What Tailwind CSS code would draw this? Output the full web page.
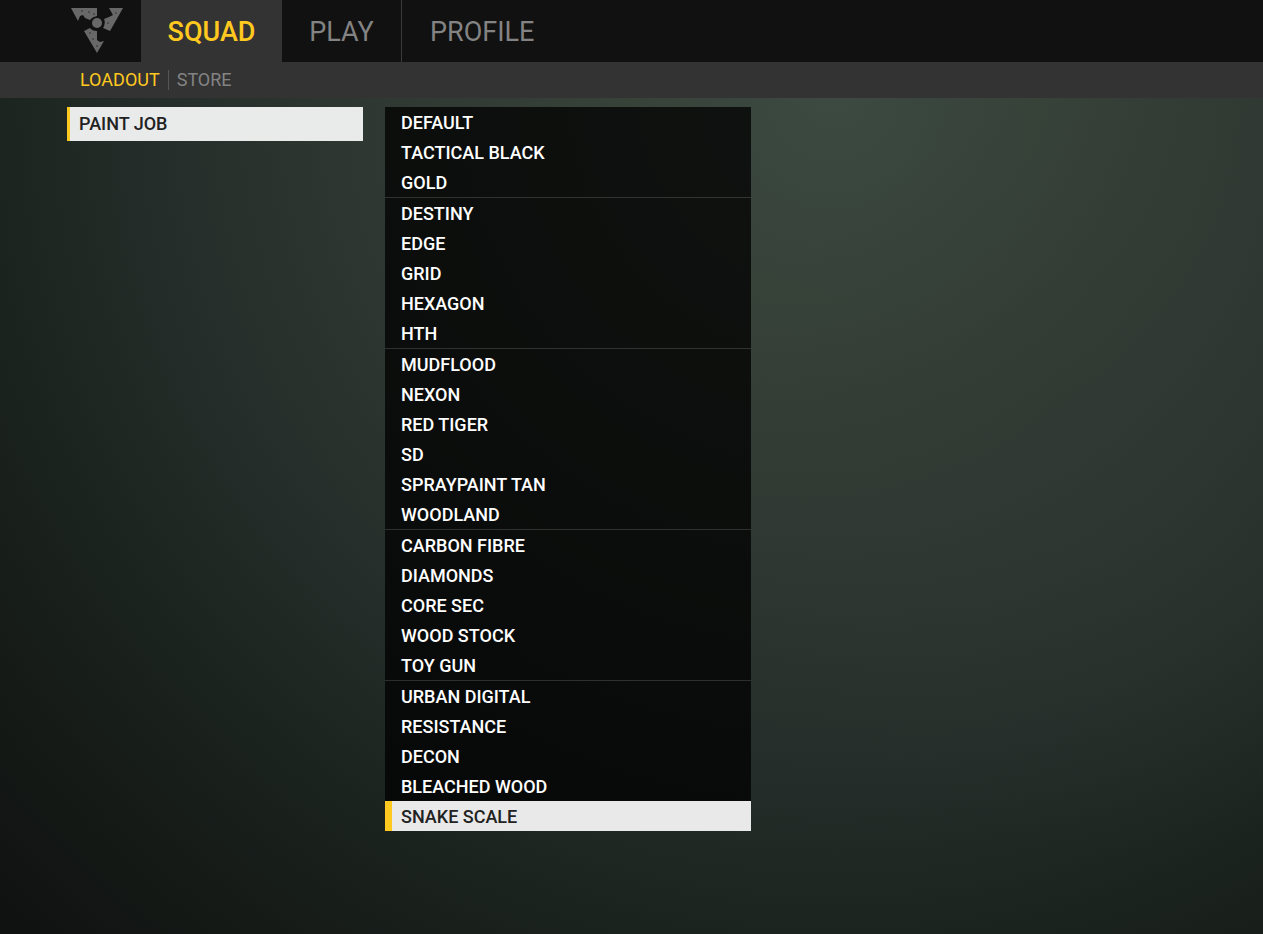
<!DOCTYPE html>
<html lang="en">
<head>
  <meta charset="UTF-8" />
  <meta name="viewport" content="width=device-width, initial-scale=1.0" />
  <title>Loadout - Paint Job</title>
  <script src="https://cdn.jsdelivr.net/npm/@tailwindcss/browser@4"></script>
</head>
<body class="min-h-screen flex flex-col bg-[#0d0d0d] font-[Roboto,sans-serif] font-medium text-[18px] uppercase text-white">
  <!-- Main navigation -->
  <header class="flex h-[62px] shrink-0 bg-[#111111] text-[27px] font-normal text-[#838383]">
    <a href="#" aria-label="Home" class="flex w-[141px] justify-end pr-4 pt-1">
      <svg class="h-[50px] w-[56px]" viewBox="0 0 56 50" fill="#686868">
        <path d="M2 4H28V12Q23 13 21 16L16 14L14 11L11 12L9 17Z" />
        <path d="M54 4L41 27L34 24Q37 19 35 15L40 13L44 11L40 4Z" />
        <path d="M15 27L21 24Q23 27 28 27V36L31 38L35 37L28 49Z" />
        <circle cx="28" cy="19" r="5" />
        <g fill="#444444">
          <circle cx="20" cy="8" r="1" />
          <circle cx="13" cy="7" r="1" />
          <circle cx="25" cy="10" r="1" />
          <circle cx="39" cy="19" r="1" />
          <circle cx="47" cy="9" r="1" />
          <circle cx="21" cy="29" r="1" />
          <circle cx="24" cy="35" r="1" />
          <circle cx="28" cy="42" r="1" />
        </g>
      </svg>
    </a>
    <nav class="flex">
      <a href="#" class="flex w-[141px] items-center justify-center bg-[#333333] pt-[2px] font-medium text-[#ffc91f]">Squad</a>
      <a href="#" class="flex w-[120px] items-center justify-center border-r border-[#3a3a3a] pt-[2px]">Play</a>
      <a href="#" class="flex items-center px-7 pt-[2px]">Profile</a>
    </nav>
  </header>

  <!-- Sub navigation -->
  <nav class="flex h-9 shrink-0 items-center bg-[#333333] pl-20 font-normal text-[#838383]">
    <a href="#" class="border-r border-[#555555] pr-2 leading-5 text-[#ffc91f]">Loadout</a>
    <a href="#" class="pl-2 leading-5">Store</a>
  </nav>

  <main class="flex grow items-start gap-[22px] pl-[67px] pt-[9px] pb-[99px] bg-[radial-gradient(ellipse_30%_45%_at_88%_45%,#2f383266_0%,#2f383200_100%),radial-gradient(ellipse_80%_120%_at_66%_0%,#3c4a41_0%,#374239_20%,#2f3832_45%,#252e2a_66%,#1b231f_85%,#151a17_100%,#0d0d0d_125%)]">
    <div class="w-[296px]">
      <button class="block h-[34px] w-full border-l-3 border-[#ffc91f] bg-[#e9eaea] pb-[2px] pl-[9px] text-left uppercase text-[#222222]">Paint Job</button>
    </div>

    <div id="paints" class="w-[366px] bg-black/75"></div>
  </main>

  <script>
    const groups = [
      ['Default', 'Tactical Black', 'Gold'],
      ['Destiny', 'Edge', 'Grid', 'Hexagon', 'HTH'],
      ['Mudflood', 'Nexon', 'Red Tiger', 'SD', 'Spraypaint Tan', 'Woodland'],
      ['Carbon Fibre', 'Diamonds', 'Core Sec', 'Wood Stock', 'Toy Gun'],
      ['Urban Digital', 'Resistance', 'Decon', 'Bleached Wood', 'Snake Scale'],
    ];
    const selected = 'Snake Scale';

    // One list per group, with a thin rule between them
    document.getElementById('paints').innerHTML = groups.map(group => `
      <ul class="border-t border-white/15 first:border-t-0">
        ${group.map(name => `
          <li>
            <button class="block h-[30px] w-full text-left uppercase ${name === selected
              ? 'border-l-7 border-[#ffc91f] bg-[#e9e9e9] pl-[9px] text-[#222222]'
              : 'pl-4'}">${name}</button>
          </li>`).join('')}
      </ul>`).join('');
  </script>
</body>
</html>
